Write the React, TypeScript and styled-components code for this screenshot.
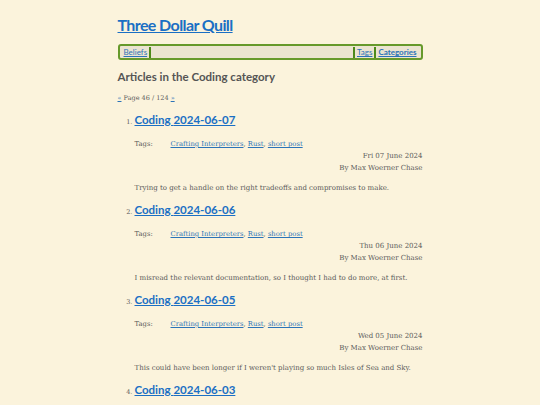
import React from 'react'
import styled, { createGlobalStyle } from 'styled-components'

const GlobalStyle = createGlobalStyle`
  html, body {
    margin: 0;
    padding: 0;
    background: #fbf3dc;
  }
  body {
    font-family: 'DejaVu Serif', serif;
    font-size: 7px;
    line-height: 12px;
    color: #5a5a5a;
  }
`

const heading = `'Lato', 'Open Sans', sans-serif`

const Page = styled.div`
  width: 305px;
  margin: 0 auto;
  padding-top: 14px;
`

const SiteTitle = styled.h1`
  margin: 0 0 9px 0;
  font: 700 16px/21px ${heading};
  letter-spacing: -0.6px;
  a {
    color: #1a6fc4;
  }
`

const Nav = styled.nav`
  display: flex;
  align-items: center;
  border: 2px solid #66992b;
  border-radius: 3px;
  background: #ebe4d0;
  height: 12px;
  padding: 0 2px;
  font: 400 8px/12px ${heading};
`

const NavLink = styled.a<{ $current?: boolean }>`
  color: #2b73b8;
  font-weight: ${({ $current }) => ($current ? 700 : 400)};
  padding: 0 2px;
`

const Sep = styled.span`
  width: 2px;
  height: 11px;
  background: #4d8a1a;
`

const Spacer = styled.span`
  flex: 1;
`

const Heading = styled.h2`
  margin: 8px 0 0 0;
  font: 700 11.5px/18px ${heading};
  color: #555;
`

const Pager = styled.p`
  margin: 7px 0 0 0;
  font-size: 6.5px;
  line-height: 10px;
  a {
    color: #2b73b8;
  }
`

const List = styled.ol`
  margin: 8px 0 0 0;
  padding-left: 17px;
  li::marker {
    font-size: 6.5px;
  }
`

const Item = styled.li`
  margin-bottom: 7px;
`

const ItemTitle = styled.h3`
  margin: 0;
  font: 700 11.5px/18px ${heading};
  a {
    color: #1a6fc4;
  }
`

const TagRow = styled.div`
  display: grid;
  grid-template-columns: 36px 1fr;
  margin-top: 9px;
  font-size: 6.8px;
  a {
    color: #2b73b8;
  }
`

const Meta = styled.div`
  text-align: right;
`

const Summary = styled.p`
  margin: 8px 0 0 0;
  font-size: 7px;
  white-space: nowrap;
`

const posts = [
  { date: '2024-06-07', day: 'Fri 07 June 2024', text: 'Trying to get a handle on the right tradeoffs and compromises to make.' },
  { date: '2024-06-06', day: 'Thu 06 June 2024', text: 'I misread the relevant documentation, so I thought I had to do more, at first.' },
  { date: '2024-06-05', day: 'Wed 05 June 2024', text: "This could have been longer if I weren't playing so much Isles of Sea and Sky." },
  { date: '2024-06-03', day: 'Mon 03 June 2024', text: 'Getting things in order for the next chapter.' },
]

export default function App() {
  return (
    <>
      <GlobalStyle />
      <Page>
        <SiteTitle><a href="#">Three Dollar Quill</a></SiteTitle>
        <Nav>
          <NavLink href="#">Beliefs</NavLink>
          <Sep />
          <Spacer />
          <Sep />
          <NavLink href="#">Tags</NavLink>
          <Sep />
          <NavLink href="#" $current>Categories</NavLink>
        </Nav>
        <Heading>Articles in the Coding category</Heading>
        <Pager><a href="#">«</a> Page 46 / 124 <a href="#">»</a></Pager>
        <List>
          {posts.map((p) => (
            <Item key={p.date}>
              <ItemTitle><a href="#">Coding {p.date}</a></ItemTitle>
              <TagRow>
                <span>Tags:</span>
                <span>
                  <a href="#">Crafting Interpreters</a>, <a href="#">Rust</a>, <a href="#">short post</a>
                </span>
              </TagRow>
              <Meta>{p.day}</Meta>
              <Meta>By Max Woerner Chase</Meta>
              <Summary>{p.text}</Summary>
            </Item>
          ))}
        </List>
      </Page>
    </>
  )
}
